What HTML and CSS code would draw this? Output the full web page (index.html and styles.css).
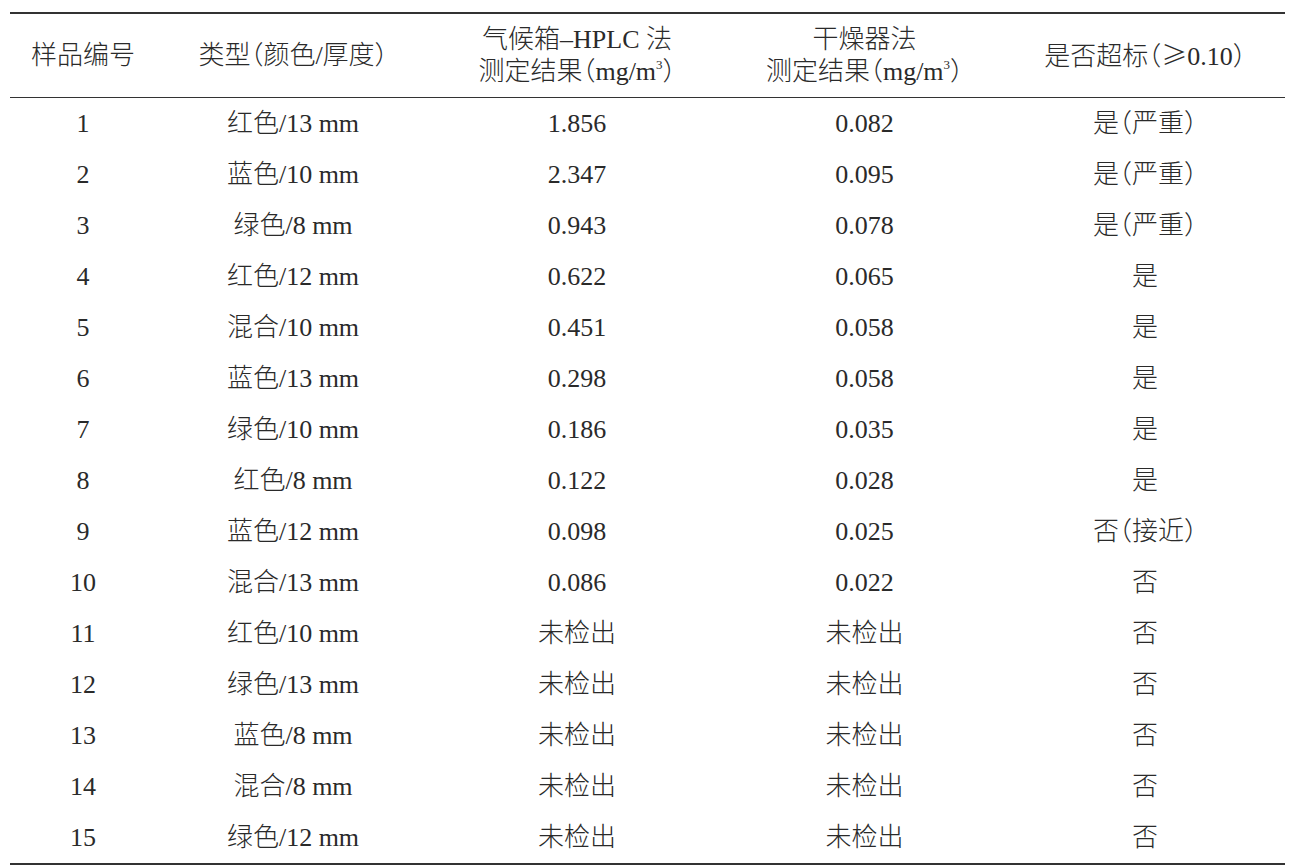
FILE: index.html
```html
<!DOCTYPE html>
<html lang="zh-CN">
<head>
<meta charset="utf-8">
<title>检测结果表</title>
<link rel="stylesheet" href="styles.css">
</head>
<body>
<div class="page">
<table class="data">
  <colgroup>
    <col class="c1"><col class="c2"><col class="c3"><col class="c4"><col class="c5">
  </colgroup>
  <thead>
    <tr>
      <th>样品编号</th>
      <th>类型（颜色/厚度）</th>
      <th>气候箱–HPLC 法<br>测定结果（mg/m<sup>3</sup>）</th>
      <th>干燥器法<br>测定结果（mg/m<sup>3</sup>）</th>
      <th>是否超标（<span class="cjk">≥</span>0.10）</th>
    </tr>
  </thead>
  <tbody>
    <tr><td>1</td><td>红色/13 mm</td><td>1.856</td><td>0.082</td><td>是（严重）</td></tr>
    <tr><td>2</td><td>蓝色/10 mm</td><td>2.347</td><td>0.095</td><td>是（严重）</td></tr>
    <tr><td>3</td><td>绿色/8 mm</td><td>0.943</td><td>0.078</td><td>是（严重）</td></tr>
    <tr><td>4</td><td>红色/12 mm</td><td>0.622</td><td>0.065</td><td>是</td></tr>
    <tr><td>5</td><td>混合/10 mm</td><td>0.451</td><td>0.058</td><td>是</td></tr>
    <tr><td>6</td><td>蓝色/13 mm</td><td>0.298</td><td>0.058</td><td>是</td></tr>
    <tr><td>7</td><td>绿色/10 mm</td><td>0.186</td><td>0.035</td><td>是</td></tr>
    <tr><td>8</td><td>红色/8 mm</td><td>0.122</td><td>0.028</td><td>是</td></tr>
    <tr><td>9</td><td>蓝色/12 mm</td><td>0.098</td><td>0.025</td><td>否（接近）</td></tr>
    <tr><td>10</td><td>混合/13 mm</td><td>0.086</td><td>0.022</td><td>否</td></tr>
    <tr><td>11</td><td>红色/10 mm</td><td>未检出</td><td>未检出</td><td>否</td></tr>
    <tr><td>12</td><td>绿色/13 mm</td><td>未检出</td><td>未检出</td><td>否</td></tr>
    <tr><td>13</td><td>蓝色/8 mm</td><td>未检出</td><td>未检出</td><td>否</td></tr>
    <tr><td>14</td><td>混合/8 mm</td><td>未检出</td><td>未检出</td><td>否</td></tr>
    <tr><td>15</td><td>绿色/12 mm</td><td>未检出</td><td>未检出</td><td>否</td></tr>
  </tbody>
</table>
</div>
</body>
</html>
```

FILE: styles.css
```css
html, body {
  margin: 0;
  padding: 0;
  background: #ffffff;
}

.page {
  padding: 12px 6px 0 10px;
}

.data {
  width: 1275px;
  border-collapse: collapse;
  table-layout: fixed;
  font-family: "Liberation Serif", "Noto Sans CJK SC", serif;
  font-size: 26px;
  font-weight: 300;
  font-feature-settings: "halt";
  color: #2a2a2a;
  border-top: 2px solid #333333;
  border-bottom: 2px solid #333333;
}

.cjk {
  font-family: "Noto Sans CJK SC", sans-serif;
  font-feature-settings: normal;
}

.c1 { width: 146px; }
.c2 { width: 274px; }
.c3 { width: 294px; }
.c4 { width: 281px; }
.c5 { width: 280px; }

.data th {
  font-weight: 300;
  height: 83px;
  padding: 0;
  line-height: 32px;
  text-align: center;
  vertical-align: middle;
  border-bottom: 1px solid #333333;
}

.data sup {
  font-size: 13px;
  line-height: 0;
  vertical-align: 11px;
}

.data td {
  height: 51px;
  padding: 0;
  text-align: center;
  vertical-align: middle;
  line-height: 30px;
}
```
